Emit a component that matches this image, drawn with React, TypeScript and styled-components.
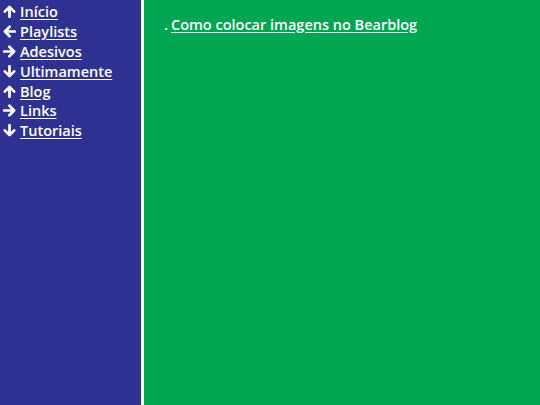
import React from "react";
import styled, { createGlobalStyle } from "styled-components";

const GlobalStyle = createGlobalStyle`
  html, body {
    margin: 0;
    padding: 0;
    height: 100%;
  }
  #root {
    height: 100%;
  }
  body {
    font-family: "Open Sans", "DejaVu Sans", sans-serif;
    font-weight: 600;
    font-size: 14.5px;
    color: #ffffff;
  }
`;

const Page = styled.div`
  display: flex;
  width: 540px;
  height: 405px;
  overflow: hidden;
`;

const Sidebar = styled.nav`
  width: 141px;
  flex-shrink: 0;
  background-color: #2e3192;
  border-right: 3px solid #ffffff;
  padding-top: 2px;
`;

const NavList = styled.ul`
  list-style: none;
  margin: 0;
  padding: 0;
`;

const NavItem = styled.li`
  display: flex;
  align-items: center;
  gap: 4px;
  height: 19.8px;
  padding-left: 3px;
`;

const Arrow = styled.svg<{ $rotate: number }>`
  width: 13px;
  height: 13px;
  flex-shrink: 0;
  transform: rotate(${({ $rotate }) => $rotate}deg);
`;

const NavLink = styled.a`
  color: #ffffff;
  text-decoration: underline;
  text-underline-offset: 2px;
`;

const Main = styled.main`
  flex-grow: 1;
  background-color: #00a651;
  padding: 15px 20px;
`;

const PostLine = styled.p`
  margin: 0;
  display: flex;
  gap: 3px;
`;

const PostLink = styled.a`
  color: #ffffff;
  text-decoration: underline;
  text-underline-offset: 2px;
`;

type Direction = "up" | "left" | "right" | "down";

const rotation: Record<Direction, number> = {
  up: 0,
  right: 90,
  down: 180,
  left: 270,
};

const navItems: { label: string; dir: Direction }[] = [
  { label: "Início", dir: "up" },
  { label: "Playlists", dir: "left" },
  { label: "Adesivos", dir: "right" },
  { label: "Ultimamente", dir: "down" },
  { label: "Blog", dir: "up" },
  { label: "Links", dir: "right" },
  { label: "Tutoriais", dir: "down" },
];

// thick arrow pointing up, rotated for the other directions
const ArrowIcon = ({ dir }: { dir: Direction }) => (
  <Arrow viewBox="0 0 13 13" $rotate={rotation[dir]} aria-hidden="true">
    <path
      d="M6.5 11.8V2.2M1.8 6.6L6.5 1.9L11.2 6.6"
      fill="none"
      stroke="#ffffff"
      strokeWidth={2.7}
      strokeLinecap="round"
      strokeLinejoin="round"
    />
  </Arrow>
);

export default function App() {
  return (
    <>
      <GlobalStyle />
      <Page>
        <Sidebar>
          <NavList>
            {navItems.map((item) => (
              <NavItem key={item.label}>
                <ArrowIcon dir={item.dir} />
                <NavLink href="#">{item.label}</NavLink>
              </NavItem>
            ))}
          </NavList>
        </Sidebar>
        <Main>
          <PostLine>
            <span>.</span>
            <PostLink href="#">Como colocar imagens no Bearblog</PostLink>
          </PostLine>
        </Main>
      </Page>
    </>
  );
}
